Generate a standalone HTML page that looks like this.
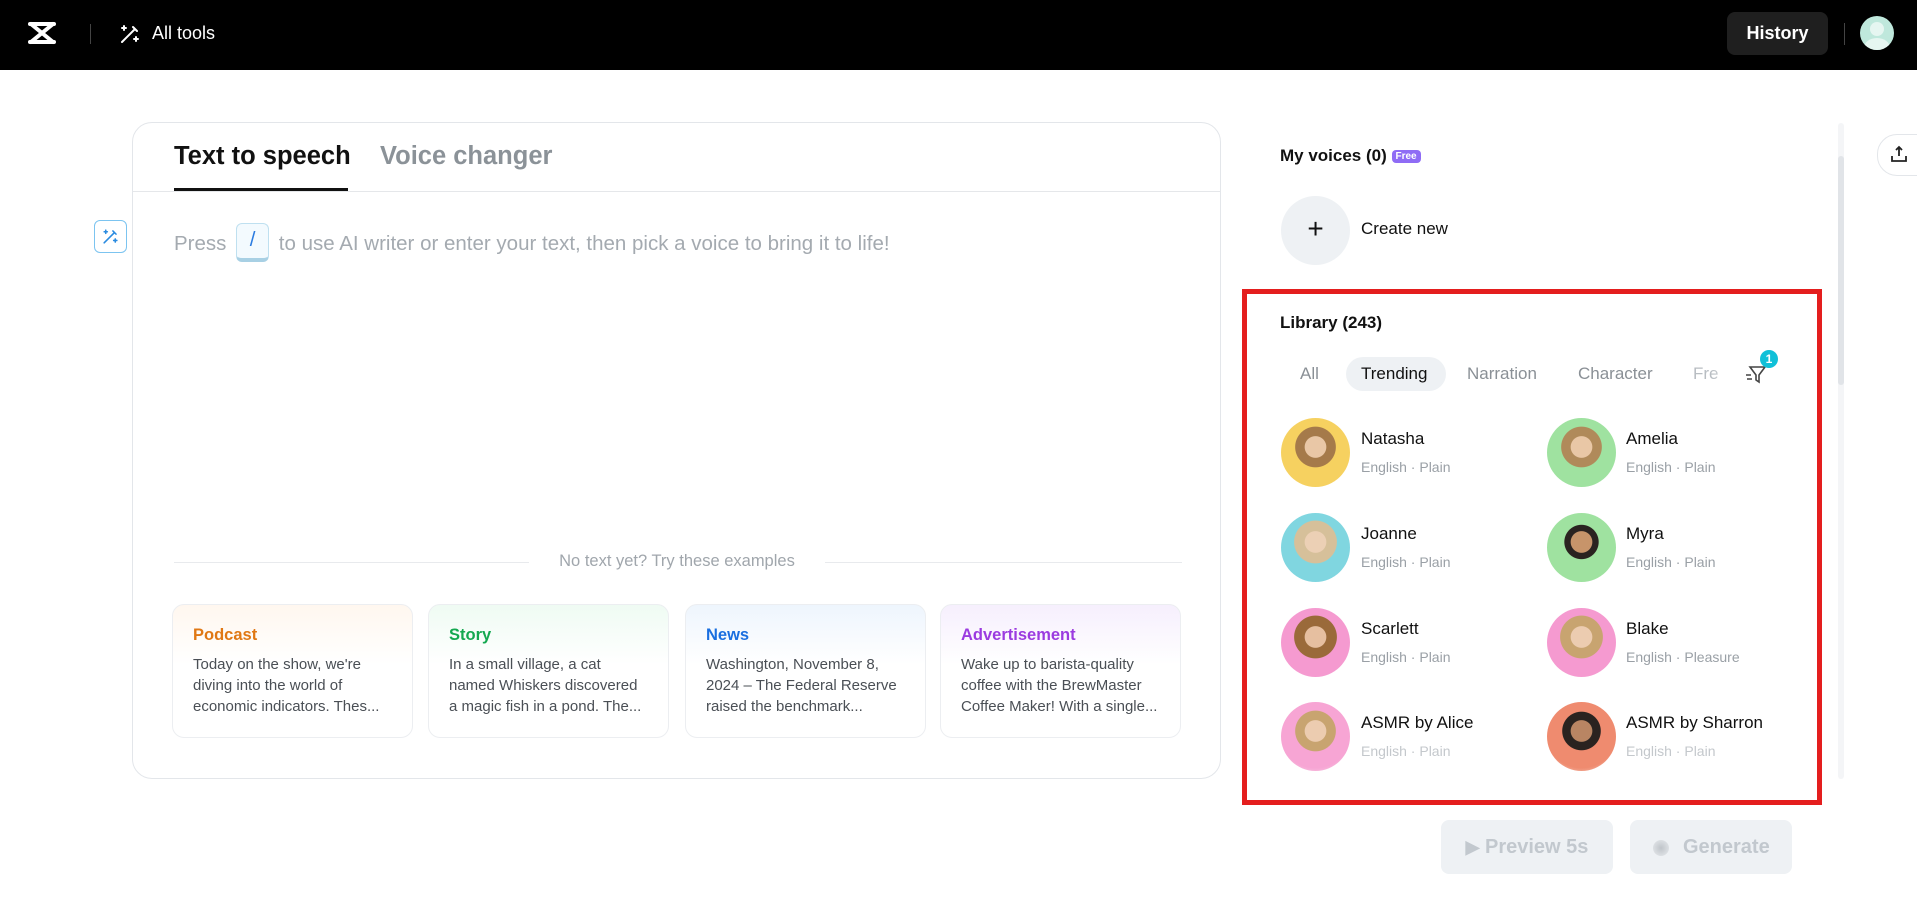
<!DOCTYPE html>
<html><head><meta charset="utf-8"><style>
*{box-sizing:border-box;margin:0;padding:0}
body{width:1917px;height:907px;background:#fff;font-family:"Liberation Sans",sans-serif;position:relative;overflow:hidden;color:#111}
.a{position:absolute}
.hdr{left:0;top:0;width:1917px;height:70px;background:#000}
.card{left:132px;top:122px;width:1089px;height:657px;border:1px solid #e3e6ea;border-radius:20px}
.ex{top:604px;width:241px;height:134px;border:1px solid #eceef1;border-radius:12px;padding:20px 20px;font-size:15px;line-height:21px;color:#4a4f55}
.ex b{display:block;font-size:16.5px;margin-bottom:8px}
.av{width:69px;height:69px;border-radius:50%;overflow:hidden}
.nm{font-size:17px;color:#111}
.sb{font-size:14px;color:#9aa0a6}
.chip{top:364px;font-size:17px;color:#8a9096}
</style></head><body>
<div class="a hdr"></div>
<svg class="a" style="left:27px;top:21px" width="30" height="24" viewBox="0 0 30 24"><path d="M3 3 L27 3 M3 21 L27 21 M4 3 L26 21 M26 3 L4 21" stroke="#fff" stroke-width="4" fill="none" stroke-linecap="round"/></svg>
<div class="a" style="left:90px;top:24px;width:1px;height:20px;background:#444"></div>
<svg class="a" style="left:118px;top:22px" width="24" height="24" viewBox="0 0 24 24" fill="none" stroke="#fff" stroke-width="2" stroke-linecap="round"><path d="M4 20 L17 7 M15 5 l4 4"/><path d="M6 4v4M4 6h4M18 15v4M16 17h4"/></svg>
<div class="a" style="left:152px;top:23px;color:#fff;font-size:18px">All tools</div>
<div class="a" style="left:1727px;top:12px;width:101px;height:43px;background:#1f1f1f;border-radius:8px;color:#fff;font-size:18px;font-weight:bold;text-align:center;line-height:43px">History</div>
<div class="a" style="left:1844px;top:23px;width:1px;height:22px;background:#444"></div>
<div class="a" style="left:1860px;top:16px;width:34px;height:34px;border-radius:50%;background:#bfe8dc;overflow:hidden"><div style="position:absolute;left:10px;top:6px;width:14px;height:14px;border-radius:50%;background:#e6f6f1"></div><div style="position:absolute;left:4px;top:22px;width:26px;height:20px;border-radius:50%;background:#e6f6f1"></div></div>

<div class="a card"></div>
<div class="a" style="left:174px;top:142px;font-size:25.5px;font-weight:bold">Text to speech</div>
<div class="a" style="left:380px;top:142px;font-size:25.5px;font-weight:bold;color:#8b9298">Voice changer</div>
<div class="a" style="left:133px;top:191px;width:1087px;height:1px;background:#e5e7ea"></div>
<div class="a" style="left:174px;top:188px;width:174px;height:3px;background:#111"></div>
<div class="a" style="left:94px;top:220px;width:33px;height:33px;border:1.5px solid #7cc4f0;border-radius:6px"></div>
<svg class="a" style="left:101px;top:227px" width="19" height="19" viewBox="0 0 24 24" fill="none" stroke="#2a8be0" stroke-width="2" stroke-linecap="round"><path d="M4 20 L17 7 M15 5 l4 4"/><path d="M6 4v4M4 6h4M18 15v4M16 17h4"/></svg>
<div class="a" style="left:174px;top:225px;font-size:20.5px;color:#a4aab0;white-space:nowrap">Press <span style="display:inline-block;width:33px;height:39px;vertical-align:middle;border:1px solid #bfe0f0;border-bottom:4px solid #a8d0e4;border-radius:6px;background:#f3fafe;color:#2a7be0;text-align:center;line-height:32px;margin:0 4px;position:relative;top:-2px">/</span> to use AI writer or enter your text, then pick a voice to bring it to life!</div>

<div class="a" style="left:174px;top:562px;width:355px;height:1px;background:#e8eaed"></div>
<div class="a" style="left:825px;top:562px;width:357px;height:1px;background:#e8eaed"></div>
<div class="a" style="left:529px;top:552px;width:296px;text-align:center;font-size:16.5px;color:#a0a6ac">No text yet? Try these examples</div>

<div class="a ex" style="left:172px;background:linear-gradient(#fff7ef,#fff 45%)"><b style="color:#e07814">Podcast</b>Today on the show, we're diving into the world of economic indicators. Thes...</div>
<div class="a ex" style="left:428px;background:linear-gradient(#effbf3,#fff 45%)"><b style="color:#14a850">Story</b>In a small village, a cat named Whiskers discovered a magic fish in a pond. The...</div>
<div class="a ex" style="left:685px;background:linear-gradient(#eef5fd,#fff 45%)"><b style="color:#1a6fe0">News</b>Washington, November 8, 2024 – The Federal Reserve raised the benchmark...</div>
<div class="a ex" style="left:940px;background:linear-gradient(#f6effd,#fff 45%)"><b style="color:#9b3be0">Advertisement</b>Wake up to barista-quality coffee with the BrewMaster Coffee Maker! With a single...</div>

<div class="a" style="left:1280px;top:146px;font-size:17px;font-weight:bold">My voices (0) <span style="display:inline-block;background:#8f6cf5;color:#fff;font-size:10px;border-radius:4px;padding:1px 4px;vertical-align:middle">Free</span></div>
<div class="a" style="left:1281px;top:196px;width:69px;height:69px;border-radius:50%;background:#eef1f4;text-align:center;line-height:66px;font-size:28px">+</div>
<div class="a" style="left:1361px;top:219px;font-size:17px">Create new</div>

<div class="a" style="left:1838px;top:123px;width:6px;height:656px;background:#f4f5f7;border-radius:3px"></div>
<div class="a" style="left:1838px;top:156px;width:6px;height:229px;background:#e1e4e8;border-radius:3px"></div>
<div class="a" style="left:1877px;top:134px;width:45px;height:42px;border:1px solid #e3e6ea;border-radius:20px 0 0 20px;background:#fff"></div>
<svg class="a" style="left:1889px;top:144px" width="20" height="20" viewBox="0 0 20 20" fill="none" stroke="#222" stroke-width="1.8"><path d="M3 12v5h14v-5M10 3v9M7 6l3-3 3 3"/></svg>

<div class="a" style="left:1242px;top:289px;width:580px;height:516px;border:5px solid #e41e1e"></div>
<div class="a" style="left:1280px;top:313px;font-size:17px;font-weight:bold">Library (243)</div>
<div class="a" style="left:1346px;top:357px;width:100px;height:34px;border-radius:17px;background:#eef1f4"></div>
<div class="a chip" style="left:1300px">All</div>
<div class="a chip" style="left:1361px;color:#111">Trending</div>
<div class="a chip" style="left:1467px">Narration</div>
<div class="a chip" style="left:1578px">Character</div>
<div class="a chip" style="left:1693px;color:#b8bdc2">Fre</div>
<div class="a" style="left:1712px;top:358px;width:38px;height:34px;background:linear-gradient(90deg,rgba(255,255,255,0),#fff 70%)"></div>
<svg class="a" style="left:1745px;top:362px" width="22" height="24" viewBox="0 0 22 24" fill="none" stroke="#444" stroke-width="1.6"><path d="M5 5h15l-6 8v7l-3-2v-5z M1 13h5 M2 17h5"/></svg>
<div class="a" style="left:1760px;top:350px;width:18px;height:18px;border-radius:50%;background:#10c0d8;color:#fff;font-size:12px;text-align:center;line-height:18px;font-weight:bold">1</div>

<div class="a av" style="left:1281px;top:418px;background:radial-gradient(circle at 50% 42%,#e9c7a6 0 20%,#a57a4a 21% 38%,#f6d160 39%)"></div>
<div class="a av" style="left:1547px;top:418px;background:radial-gradient(circle at 50% 42%,#e9c7a6 0 20%,#b08a5a 21% 38%,#9fe2a0 39%)"></div>
<div class="a av" style="left:1281px;top:513px;background:radial-gradient(circle at 50% 42%,#ecd0b5 0 20%,#d6c09a 21% 40%,#80d6e0 41%)"></div>
<div class="a av" style="left:1547px;top:513px;background:radial-gradient(circle at 50% 42%,#c7946a 0 20%,#2a2320 21% 32%,#9fe2a0 33%)"></div>
<div class="a av" style="left:1281px;top:608px;background:radial-gradient(circle at 50% 42%,#e6bfa0 0 20%,#9a6a3a 21% 40%,#f59ad0 41%)"></div>
<div class="a av" style="left:1547px;top:608px;background:radial-gradient(circle at 50% 42%,#ecccb0 0 20%,#c8a470 21% 40%,#f59ad0 41%)"></div>
<div class="a av" style="left:1281px;top:702px;background:radial-gradient(circle at 50% 42%,#ecccb0 0 20%,#c8a470 21% 38%,#f7a5d4 39% 70%,#f5eef0)"></div>
<div class="a av" style="left:1547px;top:702px;background:radial-gradient(circle at 50% 42%,#b98563 0 20%,#2a2320 21% 36%,#ef8b6f 37% 70%,#f5eee8)"></div>

<div class="a nm" style="left:1361px;top:429px">Natasha</div><div class="a sb" style="left:1361px;top:459px">English · Plain</div>
<div class="a nm" style="left:1626px;top:429px">Amelia</div><div class="a sb" style="left:1626px;top:459px">English · Plain</div>
<div class="a nm" style="left:1361px;top:524px">Joanne</div><div class="a sb" style="left:1361px;top:554px">English · Plain</div>
<div class="a nm" style="left:1626px;top:524px">Myra</div><div class="a sb" style="left:1626px;top:554px">English · Plain</div>
<div class="a nm" style="left:1361px;top:619px">Scarlett</div><div class="a sb" style="left:1361px;top:649px">English · Plain</div>
<div class="a nm" style="left:1626px;top:619px">Blake</div><div class="a sb" style="left:1626px;top:649px">English · Pleasure</div>
<div class="a nm" style="left:1361px;top:713px">ASMR by Alice</div><div class="a sb" style="left:1361px;top:743px;color:#c4c8cc">English · Plain</div>
<div class="a nm" style="left:1626px;top:713px">ASMR by Sharron</div><div class="a sb" style="left:1626px;top:743px;color:#c4c8cc">English · Plain</div>

<div class="a" style="left:1441px;top:820px;width:172px;height:54px;border-radius:8px;background:#eef1f4;color:#c2c8ce;font-size:20px;font-weight:bold;text-align:center;line-height:54px"><span style="font-size:18px">▶</span> Preview 5s</div>
<div class="a" style="left:1630px;top:820px;width:162px;height:54px;border-radius:8px;background:#eef1f4;color:#c2c8ce;font-size:20px;font-weight:bold;line-height:54px;padding-left:53px">Generate</div>
<div class="a" style="left:1653px;top:840px;width:16px;height:16px;border-radius:50%;background:radial-gradient(#bfc4c9,#e8ebee)"></div>
</body></html>
